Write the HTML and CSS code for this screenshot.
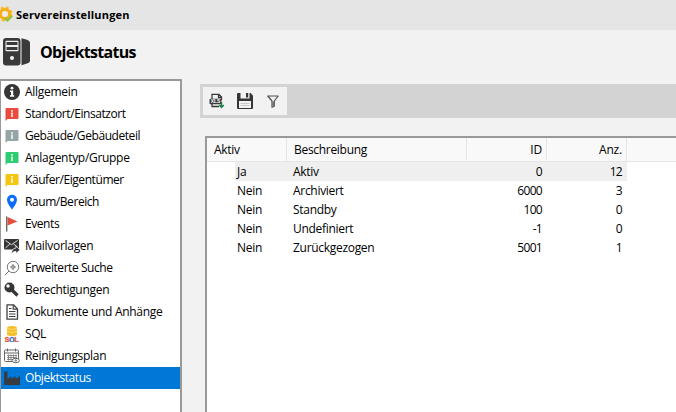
FILE: index.html
```
<!DOCTYPE html>
<html lang="de">
<head>
<meta charset="utf-8">
<title>Servereinstellungen</title>
<link rel="stylesheet" href="styles.css">
</head>
<body>
<header class="titlebar">
  <svg class="gear" width="14" height="18" viewBox="0 0 14 18"><circle cx="5" cy="9" r="6" fill="none" stroke="#fbb92c" stroke-width="3.2" stroke-dasharray="2.8 1.912"/><circle cx="5" cy="9" r="4.500" fill="none" stroke="#f9ae12" stroke-width="3.2"/><circle cx="5" cy="9" r="2.900" fill="#ececec"/><path d="M5 13.500l2.400 2 4.600-4.500" fill="none" stroke="#8cc641" stroke-width="2.400"/></svg>
  <span>Servereinstellungen</span>
</header>
<div class="heading">
  <svg width="30" height="30" viewBox="0 0 30 30"><rect x="1" y="1" width="17.500" height="27.500" rx="3" fill="#3a3a3a"/><path d="M19.500 1.200l5.500 1.500q3 .8 3 3v18q0 2-3 2.800l-5.500 1.700z" fill="#3a3a3a"/><rect x="3.500" y="3.800" width="13" height="10.400" rx="1" fill="#f2f2f2"/><path d="M4.500 6.500h11M4.500 11.500h11" stroke="#3a3a3a" stroke-width="3"/><circle cx="10" cy="21" r="2" fill="#f2f2f2"/></svg>
  <h1>Objektstatus</h1>
</div>
<div class="workspace">
  <nav class="sidebar">
    <a class="item"><svg viewBox="0 0 16 16"><circle cx="8" cy="8" r="8" fill="#363636"/><circle cx="8" cy="4.200" r="1.400" fill="#fff"/><path d="M6 6.500h3.200v4.700h1v1.500H6v-1.500h1V8H6z" fill="#fff"/></svg><span>Allgemein</span></a>
    <a class="item red tight"><svg viewBox="0 0 16 16"><use href="#bubble"/></svg><span>Standort/Einsatzort</span></a>
    <a class="item gray tight"><svg viewBox="0 0 16 16"><use href="#bubble"/></svg><span>Gebäude/Gebäudeteil</span></a>
    <a class="item green"><svg viewBox="0 0 16 16"><use href="#bubble"/></svg><span>Anlagentyp/Gruppe</span></a>
    <a class="item yellow tight"><svg viewBox="0 0 16 16"><use href="#bubble"/></svg><span>Käufer/Eigentümer</span></a>
    <a class="item tight"><svg viewBox="0 0 16 16"><path d="M8 .8a5 5 0 0 0-5 5C3 9.500 8 15.500 8 15.500s5-6 5-9.700a5 5 0 0 0-5-5zm0 3a2 2 0 1 1 0 4 2 2 0 0 1 0-4z" fill="#0a6cff" fill-rule="evenodd"/></svg><span>Raum/Bereich</span></a>
    <a class="item tight"><svg viewBox="0 0 16 16"><path d="M2.700 .5v15" stroke="#666" stroke-width="1.400"/><path d="M3.500 1L13.500 5.500 3.500 9.500z" fill="#e74c3c"/></svg><span>Events</span></a>
    <a class="item"><svg viewBox="0 0 16 16"><rect y="1" width="15" height="10.500" rx="1" fill="#363636"/><path d="M1.500 2.500l6 4.200 6-4.200M1.500 10l4.300-4M13.500 9L9.500 6" stroke="#ddd" fill="none"/><path d="M7.500 15.500q0-5 4.500-5.500V8l4 3.800-4 3.700v-2.200q-2.500 0-4.500 2.200z" fill="#363636" stroke="#fff" stroke-width=".7"/></svg><span>Mailvorlagen</span></a>
    <a class="item tight"><svg viewBox="0 0 16 16"><g fill="none" stroke="#777"><circle cx="9" cy="7" r="5.700"/><path d="M5 11L1 15"/><path d="M9 4v6M6 7h6" stroke="#888" stroke-width="1.200"/><circle cx="9" cy="7" r="1.800" stroke="#888" stroke-width=".8"/></g></svg><span>Erweiterte Suche</span></a>
    <a class="item"><svg viewBox="0 0 16 16"><circle cx="5.500" cy="5.500" r="5" fill="#363636"/><circle cx="4" cy="4" r="1.700" fill="#fff"/><path d="M8 8l5.500 5.500M10.500 12l1.500-1.500" stroke="#363636" stroke-width="3.200"/></svg><span>Berechtigungen</span></a>
    <a class="item"><svg viewBox="0 0 16 16"><path d="M3 .8h6.500L13.500 5v10.200H3z" fill="#fff" stroke="#404040" stroke-width="1.300" stroke-linejoin="round"/><path d="M9.200 1v4.200h4M5 4.500h2.500M5 7.500h6.500M5 10h6.500M5 12.500h6.500" stroke="#404040" fill="none" stroke-width="1.200"/></svg><span>Dokumente und Anhänge</span></a>
    <a class="item tight"><svg viewBox="0 0 16 16"><path d="M3 2q0-2 5-2t5 2v6q0 2-5 2t-5-2z" fill="#f6bd27"/><path d="M3 2.500q5 2 10 0M3 5.500q5 2 10 0" stroke="#ffe17a" fill="none" stroke-width=".8"/><text class="sql" x=".8" y="15.800" textLength="14" lengthAdjust="spacingAndGlyphs"><tspan class="orange">S</tspan><tspan class="blue">Q</tspan><tspan class="orange">L</tspan></text></svg><span>SQL</span></a>
    <a class="item"><svg viewBox="0 0 16 16"><g fill="none" stroke="#666"><rect x=".5" y="2" width="14" height="11.500" rx="1"/><path d="M.5 5h14M3.500 .5v3M11.500 .5v3"/><path d="M3 7.500h10M3 9.500h10M3 11.500h6M4.500 6.500v6M7 6.500v6M9.500 6.500v6M12 6.500v3" stroke-width=".7"/><ellipse cx="11.800" cy="12.500" rx="3.600" ry="2.200" fill="#fff"/><circle cx="11.800" cy="12.500" r=".8"/></g></svg><span>Reinigungsplan</span></a>
    <a class="item selected tight"><svg viewBox="0 0 16 16"><path d="M0 15V1.500h3.500V9L7.500 6v3l4-3v3L16 6v9z" fill="#363b42"/></svg><span>Objektstatus</span></a>
  </nav>
  <main class="content">
    <div class="toolbar">
      <div class="tools">
        <svg width="16" height="16" viewBox="0 0 16 16"><path d="M3 6V1.300h7L12.500 4v3M3 11v2.500h7M9.500 1.500v3h3" fill="none" stroke="#3a3a3a" stroke-width="1.300"/><rect x=".5" y="5.800" width="12" height="5.400" rx="1" fill="#3a3a3a"/><text class="xls" x="1.700" y="10.300" textLength="9.600" lengthAdjust="spacingAndGlyphs">XLS</text><path d="M12.500 9v5M10.300 12l2.200 2.500L14.800 12" fill="none" stroke="#168348" stroke-width="1.500"/></svg>
        <svg width="16" height="16" viewBox="0 0 16 16"><path d="M0 1q0-1 1-1h12.500L16 2.500V15q0 1-1 1H1q-1 0-1-1z" fill="#363636"/><path d="M3.500 0h9v5.500h-9zM2 8h12v7H2z" fill="#f2f2f2"/><path d="M9 0h2.200v4.500H9z" fill="#363636"/><path d="M3.500 10.500h9M3.500 12.500h9" stroke="#c9c9c9"/></svg>
        <svg class="filter" width="12" height="13" viewBox="0 0 12 13"><path d="M.8 1h10.400L7.300 6v5.200L5 12.200V6z" fill="none" stroke="#505050" stroke-width="1.200" stroke-linejoin="round"/><path d="M6.200 6.500v5" stroke="#777" stroke-width="1.600"/></svg>
      </div>
    </div>
    <div class="table">
      <div class="row head"><span>Aktiv</span><span>Beschreibung</span><span class="num">ID</span><span class="num">Anz.</span></div>
      <div class="row active"><span>Ja</span><span>Aktiv</span><span class="num">0</span><span class="num">12</span></div>
      <div class="row"><span>Nein</span><span>Archiviert</span><span class="num">6000</span><span class="num">3</span></div>
      <div class="row"><span>Nein</span><span>Standby</span><span class="num">100</span><span class="num">0</span></div>
      <div class="row"><span>Nein</span><span>Undefiniert</span><span class="num">-1</span><span class="num">0</span></div>
      <div class="row"><span>Nein</span><span>Zurückgezogen</span><span class="num">5001</span><span class="num">1</span></div>
    </div>
  </main>
</div>
<svg width="0" height="0"><defs><g id="bubble"><path d="M1.500 3q0-1 1-1h11q1 0 1 1v9q0 1-1 1h-10l-2 2z" fill="currentColor"/><path d="M8 4v1.700M8 6.500v4.500" stroke="#fff" stroke-opacity=".85" stroke-width="1.700"/></g></defs></svg>
</body>
</html>
```

FILE: styles.css
```
* { box-sizing: border-box; }
body {
  margin: 0;
  width: 676px;
  height: 412px;
  overflow: hidden;
  display: flex;
  flex-direction: column;
  background: #f2f2f2;
  color: #000;
  font: 12px/19px "Open Sans", "Noto Sans", sans-serif;
  letter-spacing: -0.3px;
}
svg { flex: none; display: block; }
.titlebar {
  height: 30px;
  flex: none;
  display: flex;
  align-items: center;
  gap: 2px;
  background: #e5e5e5;
  font-size: 11px;
  font-weight: 700;
  letter-spacing: 0.18px;
}
.titlebar span { padding-bottom: 2px; }
.gear { margin-bottom: 3px; }
.heading {
  height: 49px;
  flex: none;
  display: flex;
  align-items: center;
  gap: 8px;
  padding: 0 0 5px 2px;
}
h1 { margin: 0; font-size: 16px; line-height: 22px; font-weight: 700; letter-spacing: -0.68px; }
.workspace { flex: 1; display: flex; min-height: 0; }
.sidebar {
  width: 182px;
  flex: none;
  border: 2px solid #999;
  border-left-width: 1px;
  border-bottom: 0;
  background: #fff;
}
.item {
  height: 22px;
  display: flex;
  align-items: center;
  gap: 5px;
  padding-left: 3px;
}
.item span { padding-bottom: 2px; }
.item svg { width: 16px; height: 16px; }
.item.selected { background: #0078d7; color: #fff; }
.tight { letter-spacing: -0.43px; }
.red svg { color: #e94b3c; }
.gray svg { color: #95a5a5; }
.green svg { color: #2ecc71; }
.yellow svg { color: #f4c60f; }
.sql { font: 700 6.5px "Liberation Sans", sans-serif; letter-spacing: 0; stroke-width: 0.4px; }
.orange { fill: #e75b38; stroke: #e75b38; }
.blue { fill: #3d6bc9; stroke: #3d6bc9; }
.xls { font: 700 4.5px "Liberation Sans", sans-serif; letter-spacing: 0; fill: #fff; }
.content {
  flex: 1;
  min-width: 0;
  display: flex;
  flex-direction: column;
  gap: 18px;
  padding: 5px 0 0 18px;
}
.toolbar { height: 34px; flex: none; padding: 3px; background: #d3d3d3; }
.tools {
  width: 84px;
  height: 28px;
  display: flex;
  align-items: center;
  gap: 12px;
  padding-left: 6px;
  background: #f2f2f2;
}
.filter { margin-left: 2px; }
.table {
  flex: 1;
  margin-left: 5px;
  border: solid #999;
  border-width: 2px 0 0 2px;
  background: #fff;
}
.row { display: grid; grid-template-columns: 50px 180px 80px 80px; margin-left: 28px; height: 19px; width: 392px; }
.row span { padding-left: 2px; }
.row span:nth-child(2) { padding-left: 8px; }
.row .num { padding: 0 3px 0 0; text-align: right; letter-spacing: -0.7px; }
.head {
  width: auto;
  height: 24px;
  margin: 0;
  grid-template-columns: 80px 180px 80px 80px;
  border-bottom: 1px solid #e5e5e5;
  background: #f9f9f9;
  line-height: 23px;
}
.head span { border-right: 1px solid #e5e5e5; }
.head span:first-child { padding-left: 7px; }
.head span:nth-child(2) { padding-left: 7px; }
.head .num { padding-right: 4px; letter-spacing: -0.2px; }
.active { background: #efefef; }
```
